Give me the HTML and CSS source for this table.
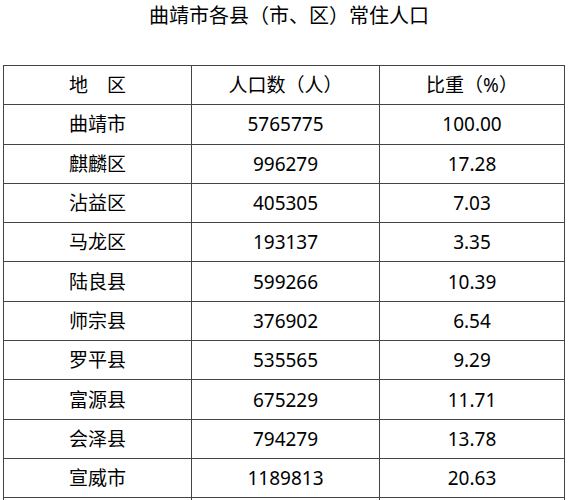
FILE: index.html
```html
<!DOCTYPE html>
<html lang="zh-CN">
<head>
<meta charset="utf-8">
<link rel="stylesheet" href="styles.css">
</head>
<body>
<h1 class="title">曲靖市各县（市、区）常住人口</h1>
<table class="data">
  <tr><td>地　区</td><td>人口数（人）</td><td>比重（%）</td></tr>
  <tr><td>曲靖市</td><td>5765775</td><td>100.00</td></tr>
  <tr><td>麒麟区</td><td>996279</td><td>17.28</td></tr>
  <tr><td>沾益区</td><td>405305</td><td>7.03</td></tr>
  <tr><td>马龙区</td><td>193137</td><td>3.35</td></tr>
  <tr><td>陆良县</td><td>599266</td><td>10.39</td></tr>
  <tr><td>师宗县</td><td>376902</td><td>6.54</td></tr>
  <tr><td>罗平县</td><td>535565</td><td>9.29</td></tr>
  <tr><td>富源县</td><td>675229</td><td>11.71</td></tr>
  <tr><td>会泽县</td><td>794279</td><td>13.78</td></tr>
  <tr><td>宣威市</td><td>1189813</td><td>20.63</td></tr>
  <tr><td></td><td></td><td></td></tr>
</table>
</body>
</html>
```
FILE: styles.css
```css
html, body {
  margin: 0;
  padding: 0;
  background: #fff;
  overflow: hidden;
}
body {
  font-family: "Noto Sans", "Noto Sans CJK SC", sans-serif;
  color: #000;
  width: 568px;
}
.title {
  margin: 0;
  height: 65px;
  box-sizing: border-box;
  padding: 1px 0 0 10px;
  font-size: 20px;
  font-weight: normal;
  line-height: 30px;
  text-align: center;
}
.data {
  margin-left: 3px;
  width: 562px;
  border-collapse: collapse;
  table-layout: fixed;
}
.data td {
  border: 1px solid #444;
  height: 38.3px;
  padding: 0;
  font-size: 19px;
  line-height: 24px;
  text-align: center;
  vertical-align: middle;
}
.data td:nth-child(1) { width: 187px; }
.data td:nth-child(2) { width: 187px; }
```
